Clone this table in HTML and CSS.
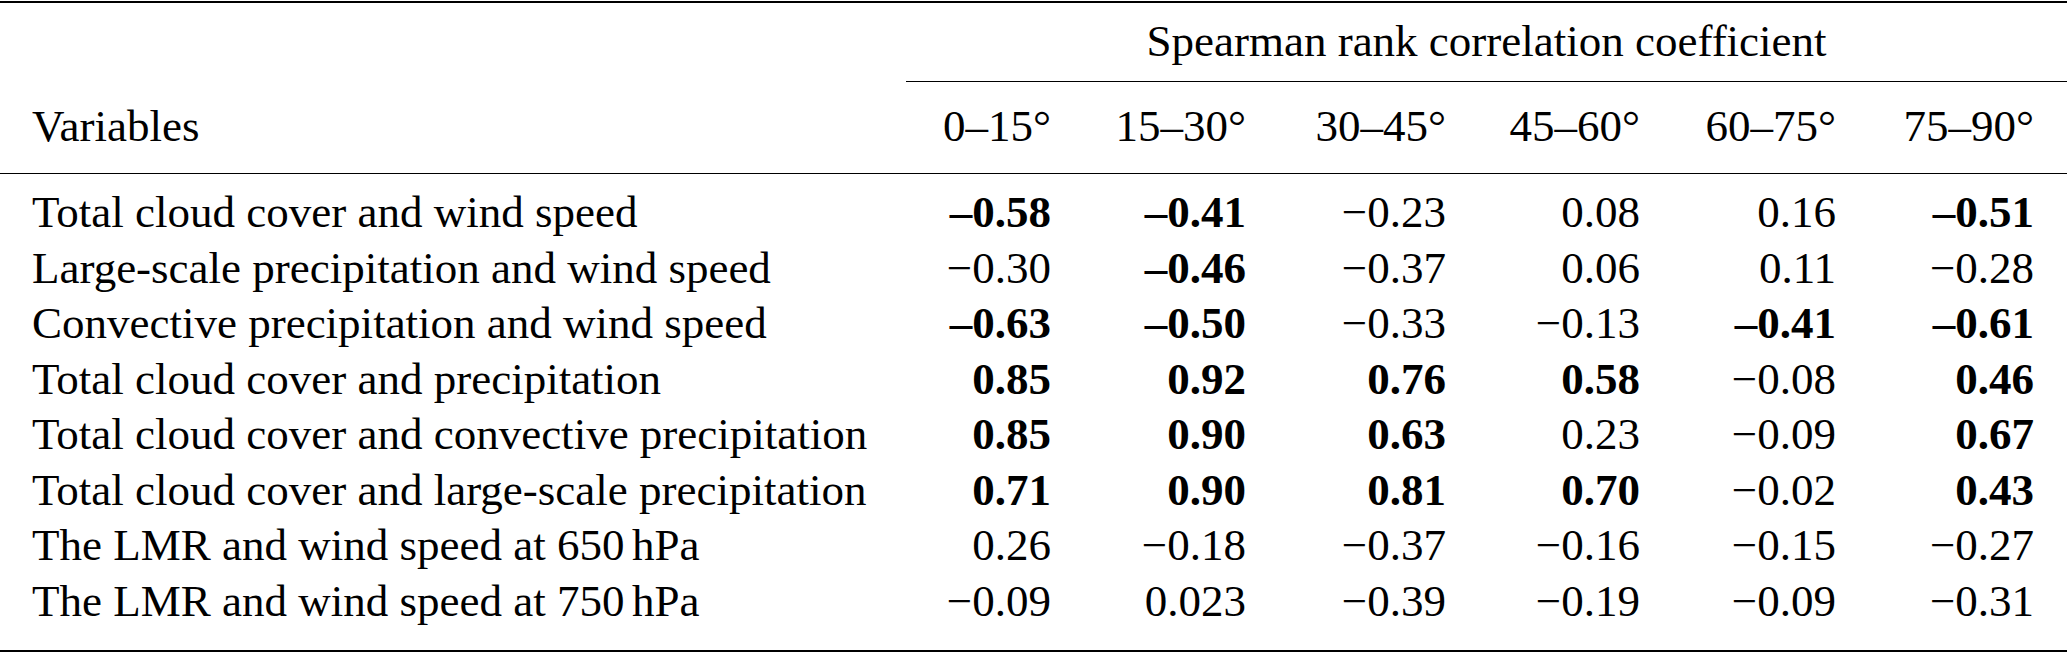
FILE: index.html
```html
<!DOCTYPE html>
<html lang="en">
<head>
<meta charset="utf-8">
<title>Spearman rank correlation table</title>
<link rel="stylesheet" href="styles.css">
</head>
<body>
<table class="corr">
  <colgroup>
    <col class="c-var">
    <col class="c1"><col class="c2"><col class="c3"><col class="c4"><col class="c5"><col class="c6">
  </colgroup>
  <thead>
    <tr class="r-group">
      <th class="var"></th>
      <th class="group" colspan="6">Spearman rank correlation coefficient</th>
    </tr>
    <tr class="r-head">
      <th class="var">Variables</th>
      <th class="num">0–15°</th>
      <th class="num">15–30°</th>
      <th class="num">30–45°</th>
      <th class="num">45–60°</th>
      <th class="num">60–75°</th>
      <th class="num">75–90°</th>
    </tr>
  </thead>
  <tbody>
    <tr class="first">
      <td class="var">Total cloud cover and wind speed</td>
      <td class="num b">–0.58</td><td class="num b">–0.41</td><td class="num">−0.23</td><td class="num">0.08</td><td class="num">0.16</td><td class="num b">–0.51</td>
    </tr>
    <tr>
      <td class="var">Large-scale precipitation and wind speed</td>
      <td class="num">−0.30</td><td class="num b">–0.46</td><td class="num">−0.37</td><td class="num">0.06</td><td class="num">0.11</td><td class="num">−0.28</td>
    </tr>
    <tr>
      <td class="var">Convective precipitation and wind speed</td>
      <td class="num b">–0.63</td><td class="num b">–0.50</td><td class="num">−0.33</td><td class="num">−0.13</td><td class="num b">–0.41</td><td class="num b">–0.61</td>
    </tr>
    <tr>
      <td class="var">Total cloud cover and precipitation</td>
      <td class="num b">0.85</td><td class="num b">0.92</td><td class="num b">0.76</td><td class="num b">0.58</td><td class="num">−0.08</td><td class="num b">0.46</td>
    </tr>
    <tr>
      <td class="var">Total cloud cover and convective precipitation</td>
      <td class="num b">0.85</td><td class="num b">0.90</td><td class="num b">0.63</td><td class="num">0.23</td><td class="num">−0.09</td><td class="num b">0.67</td>
    </tr>
    <tr>
      <td class="var">Total cloud cover and large-scale precipitation</td>
      <td class="num b">0.71</td><td class="num b">0.90</td><td class="num b">0.81</td><td class="num b">0.70</td><td class="num">−0.02</td><td class="num b">0.43</td>
    </tr>
    <tr>
      <td class="var">The LMR and wind speed at 650<span class="thin"></span>hPa</td>
      <td class="num">0.26</td><td class="num">−0.18</td><td class="num">−0.37</td><td class="num">−0.16</td><td class="num">−0.15</td><td class="num">−0.27</td>
    </tr>
    <tr class="last">
      <td class="var">The LMR and wind speed at 750<span class="thin"></span>hPa</td>
      <td class="num">−0.09</td><td class="num">0.023</td><td class="num">−0.39</td><td class="num">−0.19</td><td class="num">−0.09</td><td class="num">−0.31</td>
    </tr>
  </tbody>
</table>
</body>
</html>
```

FILE: styles.css
```css
html, body {
  margin: 0;
  padding: 0;
  background: #ffffff;
}

body {
  padding-top: 1px;
}

.corr {
  width: 2067px;
  table-layout: fixed;
  border-collapse: separate;
  border-spacing: 0;
  border-top: 2px solid #000;
  font-family: "Liberation Serif", "Times New Roman", serif;
  font-size: 45px;
  line-height: 55.57px;
  color: #000;
}

.c-var { width: 906px; }
.c1 { width: 178px; }
.c2 { width: 195px; }
.c3 { width: 200px; }
.c4 { width: 194px; }
.c5 { width: 196px; }
.c6 { width: 198px; }

.corr th,
.corr td {
  padding: 0;
  font-weight: normal;
  white-space: nowrap;
  vertical-align: top;
}

.corr .var {
  text-align: left;
  padding-left: 32px;
}

.corr .num {
  text-align: right;
  padding-right: 33px;
}

.corr .b {
  font-weight: bold;
}

.thin {
  display: inline-block;
  width: 7.5px;
}

/* group header row */
.r-group th {
  padding-top: 11px;
  padding-bottom: 11.43px;
}

.r-group .group {
  text-align: center;
  border-bottom: 1px solid #000;
}

/* column header row */
.r-head th {
  padding-top: 17px;
  padding-bottom: 18.43px;
  border-bottom: 1px solid #000;
}

/* body rows */
tbody tr.first td {
  padding-top: 11px;
}

tbody tr.last td {
  padding-bottom: 20.4px;
  border-bottom: 2px solid #000;
}
```
